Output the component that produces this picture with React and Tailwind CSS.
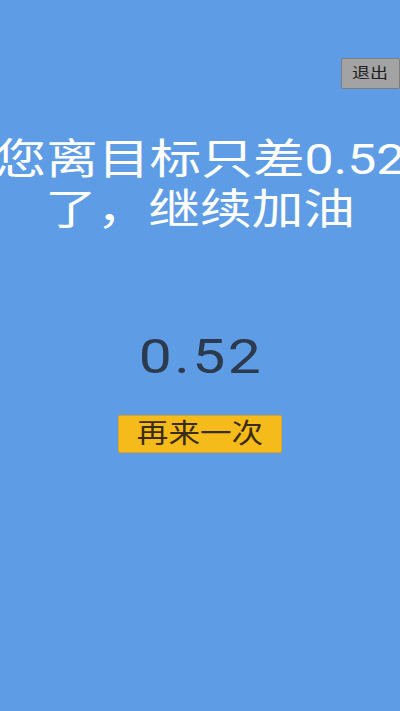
import React from 'react';

// the screen is shown a little wide, so text is stretched sideways to match
const cjk = { fontFamily: 'Roboto, "Noto Sans CJK SC", sans-serif' };

export default function App() {
  function handleExit() {}
  function handleRetry() {}

  return (
    <div className='w-full h-[711px] bg-[#5e9de6] flex flex-col items-center overflow-hidden' style={cjk}>
      <div className='w-full flex justify-end pt-[58px]'>
        <button
          onClick={handleExit}
          className='h-[31px] w-[59px] bg-[#a3a3a3] border border-[#7d7d7d] rounded-[2px] text-[15px] leading-none text-[#1e1e1e] flex items-center justify-center'
        >
          <span className='inline-block scale-x-[1.2]'>退出</span>
        </button>
      </div>

      <div className='mt-[46px] flex flex-col items-center text-white text-[42px] leading-[50px] whitespace-nowrap'>
        <p className='scale-x-[1.23]'>您离目标只差0.52</p>
        <p className='scale-x-[1.23]'>了，继续加油</p>
      </div>

      <p className='mt-[97px] text-[49px] leading-none tracking-[2px] pl-[2px] text-[#2b3a4c] scale-x-[1.2]'>0.52</p>

      <button
        onClick={handleRetry}
        className='mt-[34px] w-[164px] h-[38px] bg-[#f5bb1b] border border-[#d8a21c] rounded-[2px] text-[27px] leading-none text-[#3a2c10] flex items-center justify-center'
      >
        <span className='inline-block scale-x-[1.17]'>再来一次</span>
      </button>
    </div>
  );
}
